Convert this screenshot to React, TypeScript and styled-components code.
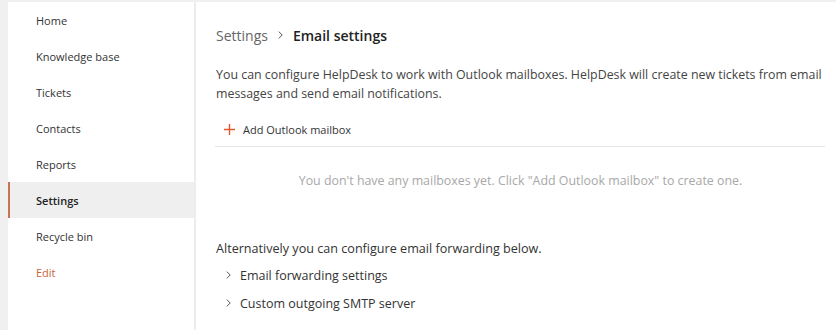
import React from "react";
import styled, { createGlobalStyle } from "styled-components";

const Global = createGlobalStyle`
  html, body { margin: 0; padding: 0; background: #f0f0f0; }
  body { font-family: "Open Sans", "Noto Sans", sans-serif; color: #333; }
  * { box-sizing: border-box; }
`;

const Page = styled.div`
  display: flex;
  height: 330px;
  padding: 2px 0 0 8px;
  overflow: hidden;
`;

const Sidebar = styled.nav`
  width: 188px;
  flex: none;
  background: #fff;
  border-right: 2px solid #ececec;
  display: flex;
  flex-direction: column;
`;

const NavItem = styled.div<{ $active?: boolean; $accent?: boolean }>`
  height: 36px;
  display: flex;
  align-items: center;
  padding-left: 26px;
  border-left: 2px solid ${(p) => (p.$active ? "#c87550" : "transparent")};
  background: ${(p) => (p.$active ? "#efefef" : "transparent")};
  font-size: 11px;
  font-weight: ${(p) => (p.$active ? 600 : 400)};
  color: ${(p) => (p.$accent ? "#c8653a" : p.$active ? "#222" : "#333")};
`;

const Main = styled.main`
  flex: 1;
  background: #fff;
  padding: 0 11px 0 20px;
  display: flex;
  flex-direction: column;
`;

const Breadcrumb = styled.div`
  display: flex;
  align-items: center;
  padding-top: 16px;
  height: 50px;
  font-size: 14px;
  gap: 10px;
`;

const Crumb = styled.span`
  color: #666;
`;

const CrumbSep = styled.span`
  display: flex;
`;

const Current = styled.span`
  font-weight: 600;
  color: #222;
`;

const Desc = styled.p`
  margin: 13px 0 0;
  font-size: 12.4px;
  line-height: 19px;
  color: #444;
`;

const AddButton = styled.div`
  display: flex;
  align-items: center;
  gap: 8px;
  margin-top: 16px;
  padding-left: 8px;
  height: 20px;
  font-size: 11px;
  color: #333;
`;

const PlusIcon = styled.svg`
  flex: none;
  display: block;
`;

const Divider = styled.div`
  height: 1px;
  background: #e6e6e6;
  margin: 7px 0 0 -1px;
`;

const Empty = styled.div`
  text-align: center;
  font-size: 12.4px;
  color: #a8a8a8;
  margin-top: 25px;
`;

const Alt = styled.p`
  margin: 51px 0 0;
  font-size: 12.6px;
  color: #333;
`;

const ExpanderList = styled.div`
  display: flex;
  flex-direction: column;
  margin-top: 4px;
`;

const Expander = styled.div`
  display: flex;
  align-items: center;
  gap: 9px;
  height: 28px;
  padding-left: 10px;
  font-size: 12.5px;
  color: #333;
`;

const Plus = () => (
  <PlusIcon width="11" height="11" viewBox="0 0 11 11">
    <path d="M5.5 0v11M0 5.5h11" stroke="#e0582c" strokeWidth="1.4" fill="none" />
  </PlusIcon>
);

const Chevron = ({ size = 8 }: { size?: number }) => (
  <svg width={size / 2 + 1} height={size} viewBox="0 0 5 8">
    <path d="M0.8 0.6 L4.2 4 L0.8 7.4" stroke="#555" strokeWidth="1" fill="none" />
  </svg>
);

export default function App() {
  const items = ["Home", "Knowledge base", "Tickets", "Contacts", "Reports", "Settings", "Recycle bin"];
  return (
    <>
      <Global />
      <Page>
        <Sidebar>
          {items.map((t) => (
            <NavItem key={t} $active={t === "Settings"}>
              {t}
            </NavItem>
          ))}
          <NavItem $accent>Edit</NavItem>
        </Sidebar>
        <Main>
          <Breadcrumb>
            <Crumb>Settings</Crumb>
            <CrumbSep>
              <Chevron size={8} />
            </CrumbSep>
            <Current>Email settings</Current>
          </Breadcrumb>
          <Desc>
            You can configure HelpDesk to work with Outlook mailboxes. HelpDesk will create new tickets from email
            messages and send email notifications.
          </Desc>
          <AddButton>
            <Plus />
            Add Outlook mailbox
          </AddButton>
          <Divider />
          <Empty>You don't have any mailboxes yet. Click "Add Outlook mailbox" to create one.</Empty>
          <Alt>Alternatively you can configure email forwarding below.</Alt>
          <ExpanderList>
            <Expander>
              <Chevron />
              Email forwarding settings
            </Expander>
            <Expander>
              <Chevron />
              Custom outgoing SMTP server
            </Expander>
          </ExpanderList>
        </Main>
      </Page>
    </>
  );
}
